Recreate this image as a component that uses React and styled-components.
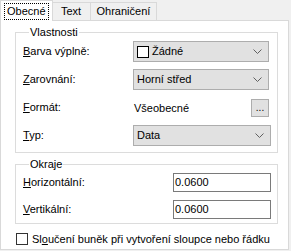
import React from "react";
import styled, { createGlobalStyle } from "styled-components";

const Global = createGlobalStyle`
  html, body { margin: 0; padding: 0; background: #f0f0f0; }
  body { font-family: "Liberation Sans", Arial, sans-serif; font-size: 11px; color: #000; }
`;

const Window = styled.div`
  width: 291px;
  height: 251px;
  background: #f0f0f0;
  overflow: hidden;
`;

const TabBar = styled.div`
  display: flex;
  align-items: flex-end;
  height: 21px;
  position: relative;
  z-index: 1;
`;

const Tab = styled.div`
  box-sizing: border-box;
  min-width: ${(p) => (p.$active ? "0" : "39px")};
  height: ${(p) => (p.$active ? "21px" : "19px")};
  padding: 0 ${(p) => (p.$active ? "3px" : "6px")};
  margin-left: ${(p) => (p.$first ? "0" : "-1px")};
  border: 1px solid #d9d9d9;
  border-bottom: ${(p) => (p.$active ? "none" : "1px solid #d9d9d9")};
  background: ${(p) => (p.$active ? "#fff" : "#f0f0f0")};
  display: flex;
  justify-content: center;
  align-items: ${(p) => (p.$active ? "flex-start" : "center")};
  padding-top: ${(p) => (p.$active ? "2px" : "0")};
  line-height: 13px;
`;

const Focus = styled.span`
  border: 1px dotted #000;
  padding: 1px 2px 1px 2px;
`;

const Panel = styled.div`
  box-sizing: border-box;
  width: 289px;
  height: 230px;
  margin-top: -1px;
  background: #fff;
  border: 1px solid #d9d9d9;
  padding: 5px 10px 0 14px;
`;

const Group = styled.fieldset`
  margin: ${(p) => p.$mt || 0}px 0 0 0;
  border: 1px solid #dcdcdc;
  padding: ${(p) => p.$pad};
  min-width: 0;
`;

const Legend = styled.legend`
  padding: 0 1px;
  margin-left: 6px;
  line-height: 13px;
`;

const Grid = styled.div`
  display: grid;
  grid-template-columns: 110px 1fr;
  grid-auto-rows: ${(p) => p.$row}px;
  row-gap: ${(p) => p.$gap}px;
  align-items: center;
`;

const Label = styled.span`
  line-height: 13px;
  white-space: nowrap;
`;

const U = styled.span`
  text-decoration: underline;
  text-underline-offset: 1px;
`;

const Combo = styled.div`
  box-sizing: border-box;
  height: 21px;
  width: ${(p) => p.$w || 136}px;
  background: #e1e1e1;
  border: 1px solid #adadad;
  display: flex;
  align-items: center;
  padding: 0 6px 0 3px;
  gap: 3px;
`;

const ComboText = styled.span`
  flex: 1;
  line-height: 13px;
`;

const Swatch = styled.span`
  box-sizing: border-box;
  width: 12px;
  height: 12px;
  border: 1px solid #000;
  background: #fff;
`;

const Chevron = () => (
  <svg width="9" height="6" viewBox="0 0 9 6">
    <path d="M0.5 0.5 L4.5 4.5 L8.5 0.5" fill="none" stroke="#606060" strokeWidth="1" />
  </svg>
);

const FormatRow = styled.div`
  display: flex;
  align-items: center;
  justify-content: space-between;
  width: 136px;
  padding-left: 1px;
  box-sizing: border-box;
`;

const DotsButton = styled.div`
  box-sizing: border-box;
  width: 18px;
  height: 18px;
  background: #e1e1e1;
  border: 1px solid #adadad;
  display: flex;
  align-items: flex-end;
  justify-content: center;
  line-height: 13px;
  padding-bottom: 2px;
  font-size: 10px;
`;

const Field = styled.div`
  box-sizing: border-box;
  height: 19px;
  width: 98px;
  margin-left: 40px;
  background: #fff;
  border: 1px solid #7a7a7a;
  display: flex;
  align-items: center;
  padding-left: 1px;
  line-height: 13px;
`;

const CheckRow = styled.div`
  display: flex;
  align-items: center;
  gap: 4px;
  margin-top: 9px;
  margin-left: 1px;
  white-space: nowrap;
`;

const Box = styled.span`
  box-sizing: border-box;
  width: 12px;
  height: 12px;
  border: 1px solid #333;
  background: #fff;
`;

export default function App() {
  return (
    <Window>
      <Global />
      <TabBar>
        <Tab $active $first>
          <Focus>Obecné</Focus>
        </Tab>
        <Tab>Text</Tab>
        <Tab>Ohraničení</Tab>
      </TabBar>
      <Panel>
        <Group $pad="2px 8px 6px 7px">
          <Legend>Vlastnosti</Legend>
          <Grid $row={21} $gap={7}>
            <Label>
              <U>B</U>arva výplně:
            </Label>
            <Combo>
              <Swatch />
              <ComboText>Žádné</ComboText>
              <Chevron />
            </Combo>
            <Label>
              <U>Z</U>arovnání:
            </Label>
            <Combo>
              <ComboText>Horní střed</ComboText>
              <Chevron />
            </Combo>
            <Label>
              <U>F</U>ormát:
            </Label>
            <FormatRow>
              <span>Všeobecné</span>
              <DotsButton>...</DotsButton>
            </FormatRow>
            <Label>
              <U>T</U>yp:
            </Label>
            <Combo $w={138}>
              <ComboText>Data</ComboText>
              <Chevron />
            </Combo>
          </Grid>
        </Group>
        <Group $pad="2px 8px 4px 7px" $mt={5}>
          <Legend>Okraje</Legend>
          <Grid $row={19} $gap={8}>
            <Label>
              <U>H</U>orizontální:
            </Label>
            <Field>0.0600</Field>
            <Label>
              <U>V</U>ertikální:
            </Label>
            <Field>0.0600</Field>
          </Grid>
        </Group>
        <CheckRow>
          <Box />
          <span>
            Sl<U>o</U>učení buněk při vytvoření sloupce nebo řádku
          </span>
        </CheckRow>
      </Panel>
    </Window>
  );
}
